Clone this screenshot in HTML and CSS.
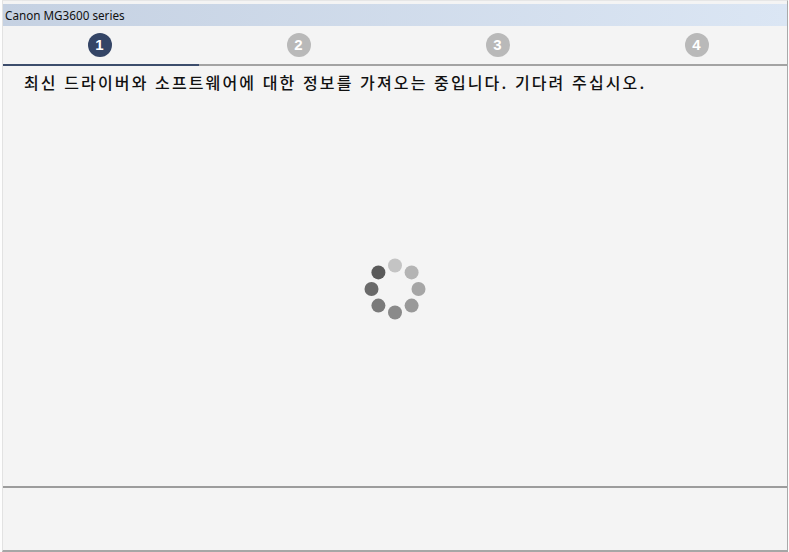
FILE: index.html
```html
<!DOCTYPE html>
<html lang="ko">
<head>
    <meta charset="UTF-8">
    <title>Canon MG3600 series</title>
    <link rel="stylesheet" href="styles.css">
</head>
<body>
<div class="window">
    <div class="titlebar">Canon MG3600 series</div>
    <div class="steps">
        <div class="step active"><span class="num">1</span></div>
        <div class="step"><span class="num">2</span></div>
        <div class="step"><span class="num">3</span></div>
        <div class="step"><span class="num">4</span></div>
    </div>
    <div class="main">
        <p class="msg">최신 드라이버와 소프트웨어에 대한 정보를 가져오는 중입니다. 기다려 주십시오.</p>
        <div class="loading">
            <svg class="spinner" width="62" height="62" viewBox="-1 -1 62 62">
                <circle cx="30" cy="6.5" r="7" fill="#c4c4c4"/>
                <circle cx="46.6" cy="13.4" r="7" fill="#b4b4b4"/>
                <circle cx="53.5" cy="30" r="7" fill="#a6a6a6"/>
                <circle cx="46.6" cy="46.6" r="7" fill="#999"/>
                <circle cx="30" cy="53.5" r="7" fill="#8a8a8a"/>
                <circle cx="13.4" cy="46.6" r="7" fill="#7a7a7a"/>
                <circle cx="6.5" cy="30" r="7" fill="#6a6a6a"/>
                <circle cx="13.4" cy="13.4" r="7" fill="#5a5a5a"/>
            </svg>
        </div>
    </div>
    <div class="footer"></div>
</div>
</body>
</html>
```

FILE: styles.css
```css
*{margin: 0;padding: 0;box-sizing: border-box;}

body{
    width: 789px;
    height: 552px;
    background: #fdfdfd;
    overflow: hidden;
}
.window{
    height: 552px;
    margin: 0 1px 0 2px;
    padding-top: 3px;
    border-top: 1px solid #e6e6e6;
    border-right: 1px solid #a9a9a9;
    border-bottom: 2px solid #a6a6a6;
    border-left: 1px solid #e2e2e2;
    background: #f4f4f4;
    display: flex;
    flex-direction: column;
}
.titlebar{
    height: 22px;
    line-height: 22px;
    padding-left: 2px;
    background: linear-gradient(to right, #c5d1e2, #dbe6f4);
    font-family: "Noto Sans", sans-serif;
    font-size: 11.7px;
    color: #111;
}
.steps{
    display: flex;
    height: 40px;
    border-bottom: 2px solid #a3a3a3;
}
.step{
    flex: 0 0 199px;
    display: flex;
    justify-content: center;
    align-items: center;
    margin-bottom: -2px;
    border-bottom: 2px solid transparent;
}
.step:first-child{
    flex-basis: 196px;
    padding-right: 3px;
}
.step.active{
    border-bottom-color: #3c4d6c;
}
.step .num{
    width: 24px;
    height: 24px;
    border-radius: 50%;
    background: #b9b9b9;
    color: #fff;
    font-family: "Liberation Sans", sans-serif;
    font-weight: bold;
    font-size: 15px;
    line-height: 24px;
    text-align: center;
}
.step.active .num{
    background: #344566;
}
.main{
    flex: 1;
    display: flex;
    flex-direction: column;
    border-bottom: 2px solid #9c9c9c;
}
.msg{
    padding: 7px 0 0 21px;
    font-family: "Noto Sans CJK KR", sans-serif;
    font-size: 16px;
    font-weight: 500;
    letter-spacing: 2.12px;
    line-height: 19px;
    color: #111;
}
.loading{
    flex: 1;
    display: flex;
    justify-content: center;
    align-items: center;
}
.footer{
    height: 62px;
}
```
